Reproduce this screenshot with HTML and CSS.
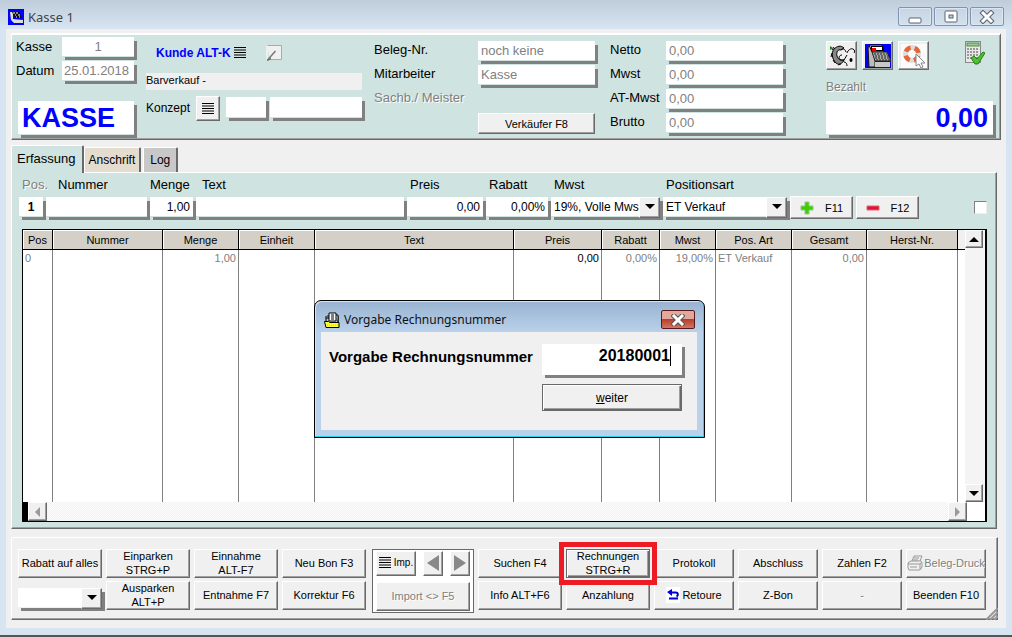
FILE: index.html
```html
<!DOCTYPE html>
<html lang="de">
<head>
<meta charset="utf-8">
<title>Kasse 1</title>
<link rel="stylesheet" href="styles.css">
</head>
<body>
<div class="window">
  <header class="titlebar">
    <svg class="app-icon" width="16" height="16" viewBox="0 0 16 16" aria-hidden="true"><rect width="16" height="16" fill="#00f"/><path d="M2 3h3v7l10 1v3H6L3 11z" fill="#ddd"/><path d="M4 3h7l3 6H7z" fill="#111"/><path d="M5 4h2M8 4h2M7 6h1M10 6h2M8 8h1M11 8h1" stroke="#fff"/></svg>
    <h1 class="title">Kasse 1</h1>
    <div class="win-buttons">
      <button class="win-btn" type="button" aria-label="Minimieren"><svg width="16" height="14" viewBox="0 0 16 14"><rect x="2" y="8" width="12" height="5" rx="1" fill="#fff" stroke="#5b6470"/></svg></button>
      <button class="win-btn" type="button" aria-label="Maximieren"><svg width="16" height="14" viewBox="0 0 16 14"><rect x="2" y="1" width="12" height="11" rx="1" fill="#fff" stroke="#5b6470"/><rect x="6" y="5" width="4" height="3" fill="#bccbda" stroke="#5b6470"/></svg></button>
      <button class="win-btn" type="button" aria-label="Schließen"><svg width="16" height="14" viewBox="0 0 16 14"><path d="M4 3l8 8M12 3l-8 8" stroke="#5b6470" stroke-width="5" stroke-linecap="square"/><path d="M4 3l8 8M12 3l-8 8" stroke="#fff" stroke-width="3" stroke-linecap="square"/></svg></button>
    </div>
  </header>

  <main class="client">
    <section class="panel head">
      <div class="head-kasse">
        <div class="pair"><label for="kasse">Kasse</label><input id="kasse" class="field muted center" value="1"></div>
        <div class="pair"><label for="datum">Datum</label><input id="datum" class="field muted" value="25.01.2018"></div>
        <output class="big">KASSE</output>
      </div>

      <div class="head-kunde">
        <div class="kunde-row">
          <a class="kunde" href="#kunde">Kunde ALT-K</a>
          <svg width="12" height="12" viewBox="0 0 12 12" aria-hidden="true"><path d="M0 .5h12M0 3h12M0 5.500h12M0 8h12M0 10.500h12" stroke="#000"/></svg>
          <button class="note" type="button" aria-label="Notiz"><svg width="16" height="16" viewBox="0 0 16 16"><path d="M1 .5h14.500v14H4" fill="#f0f0f0" stroke="#aaa"/><path d="M1 .5v15" stroke="#fff"/><path d="M1.500 15l8-9M1 15.500l4-2" stroke="#777" fill="none" stroke-width="1.500"/></svg></button>
        </div>
        <div class="bar">Barverkauf -</div>
        <div class="konzept-row">
          <label for="konzept">Konzept</label>
          <button class="btn konzept-btn" type="button" aria-label="Konzept wählen"><svg width="12" height="12" viewBox="0 0 12 12"><path d="M0 .5h12M0 3h12M0 5.500h12M0 8h12M0 10.500h12" stroke="#000"/></svg></button>
          <input id="konzept" class="field konzept-no">
          <input class="field konzept-text" aria-label="Konzepttext">
        </div>
      </div>

      <div class="head-rows head-beleg">
        <label for="beleg">Beleg-Nr.</label><input id="beleg" class="field muted" value="noch keine">
        <label for="mitarb">Mitarbeiter</label><input id="mitarb" class="field muted" value="Kasse">
        <span class="disabled">Sachb./ Meister</span><span></span>
        <span></span><button class="btn" type="button">Verkäufer F8</button>
      </div>

      <div class="head-rows head-summe">
        <label for="netto">Netto</label><input id="netto" class="field muted" value="0,00">
        <label for="mwst">Mwst</label><input id="mwst" class="field muted" value="0,00">
        <label for="atmwst">AT-Mwst</label><input id="atmwst" class="field muted" value="0,00">
        <label for="brutto">Brutto</label><input id="brutto" class="field muted" value="0,00">
      </div>

      <div class="head-bezahlt">
        <div class="tools">
          <button class="btn tool" type="button" aria-label="Räder"><svg width="26" height="24" viewBox="0 0 26 24"><path d="M15 4C12 1 8 2 5 5c-3 4-2 10 2 14 2 2 5 1 7-1l1-2c-4 1-6-1-7-4-1-4 1-7 4-6z" fill="#888" stroke="#000"/><path d="M5 3l-2 3M3 9L2 13M4 16l2 3M9 21l3-1" stroke="#000"/><path d="M12 6c2-2 4-1 5 2M13 11c-3 0-4 3-1 5h3l3-5M18 9c1-3 4-5 6-4s2 3 1 4M15 18c2 0 3 2 3 4" fill="none" stroke="#000"/><ellipse cx="22" cy="16" rx="1.500" ry="2"/><path d="M1 2l3 2-3 2z" fill="#080"/></svg></button>
          <button class="btn tool" type="button" aria-label="Kassenlade"><svg width="26" height="24" viewBox="0 0 26 24"><rect width="26" height="24" fill="#00f"/><path d="M3 3l3-1 4 13v8H4z" fill="#bbb" stroke="#111"/><path d="M4 1h13l2 7H7z" fill="#c8c8c8" stroke="#000"/><rect x="6.500" y="2.500" width="11" height="4" fill="#fff" stroke="#000"/><rect x="7" y="4" width="4" height="3" fill="#e00"/><path d="M7 8h15l4 9H10z" fill="#aaa" stroke="#222"/><path d="M9 10h13M10 12h14M10 14h14M11 16h14" stroke="#222" stroke-dasharray="2 1"/><rect x="10" y="18" width="15" height="5" fill="#c8c8c8"/></svg></button>
          <button class="btn tool" type="button" aria-label="Hilfe"><svg width="26" height="24" viewBox="0 0 26 24"><rect width="26" height="24" fill="#fbfbfb"/><circle cx="11" cy="10" r="6.500" fill="none" stroke="#ddd" stroke-width="5"/><circle cx="11" cy="10" r="6.500" fill="none" stroke="#e4673c" stroke-width="4.500" stroke-dasharray="6 4.210" stroke-dashoffset="-2"/><path d="M15 10v12l3-2 2 4 2-1-2-4h4z" fill="#fff" stroke="#888"/></svg></button>
          <svg class="calc" width="20" height="24" viewBox="0 0 20 24" aria-hidden="true"><rect x=".5" y=".5" width="15" height="21" fill="#e8e8e8" stroke="#888"/><rect x="2" y="2" width="12" height="3" fill="#9c8" stroke="#585"/><path d="M2 8h12M2 11h12M2 14h12M2 17h12" stroke="#999" stroke-width="2" stroke-dasharray="2 1"/><path d="M6 17l3-2 3 3 6-7 2 1-7 11h-3z" fill="#4cc22e" stroke="#287b1a"/></svg>
        </div>
        <span class="disabled bezahlt-label">Bezahlt</span>
        <output class="big right">0,00</output>
      </div>
    </section>

    <nav class="tabs" aria-label="Register">
      <button class="tab active" type="button">Erfassung</button>
      <button class="tab sand" type="button">Anschrift</button>
      <button class="tab grey" type="button">Log</button>
    </nav>

    <section class="panel sheet">
      <div class="entry">
        <div class="cell"><label class="disabled" for="e-pos">Pos.</label><input id="e-pos" class="field bold center" value="1"></div>
        <div class="cell"><label class="indent" for="e-nr">Nummer</label><input id="e-nr" class="field"></div>
        <div class="cell"><label class="flush" for="e-menge">Menge</label><input id="e-menge" class="field right" value="1,00"></div>
        <div class="cell"><label class="wide" for="e-text">Text</label><input id="e-text" class="field"></div>
        <div class="cell"><label for="e-preis">Preis</label><input id="e-preis" class="field right" value="0,00"></div>
        <div class="cell"><label for="e-rabatt">Rabatt</label><input id="e-rabatt" class="field right" value="0,00%"></div>
        <div class="cell"><label for="e-mwst">Mwst</label><div class="combo"><select id="e-mwst"><option>19%, Volle Mws</option></select></div></div>
        <div class="cell"><label for="e-art">Positionsart</label><div class="combo"><select id="e-art"><option>ET Verkauf</option></select></div></div>
        <button class="btn key" type="button"><svg width="14" height="14" viewBox="0 0 14 14" aria-hidden="true"><path d="M5 1h4v4h4v4H9v4H5V9H1V5h4z" fill="#4c0" stroke="#8c8"/></svg>F11</button>
        <button class="btn key" type="button"><svg width="14" height="14" viewBox="0 0 14 14" aria-hidden="true"><path d="M1 5h12v4H1z" fill="#e01040" stroke="#d66"/></svg>F12</button>
        <input class="tick" type="checkbox" aria-label="Auswahl">
      </div>

      <div class="grid">
        <div class="grid-main">
          <table>
            <colgroup><col class="c-pos"><col class="c-nr"><col class="c-mid"><col class="c-mid"><col><col class="c-preis"><col class="c-rabatt"><col class="c-mwst"><col class="c-mid"><col class="c-gesamt"><col class="c-herst"></colgroup>
            <thead><tr><th>Pos</th><th>Nummer</th><th>Menge</th><th>Einheit</th><th>Text</th><th>Preis</th><th>Rabatt</th><th>Mwst</th><th>Pos. Art</th><th>Gesamt</th><th>Herst-Nr.</th></tr></thead>
            <tbody>
              <tr><td>0</td><td></td><td class="right">1,00</td><td></td><td></td><td class="right strong">0,00</td><td class="right">0,00%</td><td class="right">19,00%</td><td>ET Verkauf</td><td class="right">0,00</td><td></td></tr>
              <tr class="rest"><td></td><td></td><td></td><td></td><td></td><td></td><td></td><td></td><td></td><td></td><td></td></tr>
            </tbody>
          </table>
        </div>
        <div class="vscroll">
          <button class="btn" type="button" aria-label="Nach oben"><svg width="10" height="5" viewBox="0 0 10 5"><path d="M0 5l5-5 5 5z"/></svg></button>
          <button class="btn" type="button" aria-label="Nach unten"><svg width="10" height="5" viewBox="0 0 10 5"><path d="M0 0h10l-5 5z"/></svg></button>
        </div>
        <div class="hscroll">
          <button class="btn" type="button" aria-label="Nach links"><svg width="5" height="10" viewBox="0 0 5 10"><path d="M5 0v10L0 5z" fill="#999"/></svg></button>
          <button class="btn" type="button" aria-label="Nach rechts"><svg width="5" height="10" viewBox="0 0 5 10"><path d="M0 0v10l5-5z" fill="#999"/></svg></button>
        </div>
      </div>
    </section>

    <section class="actions">
      <button class="btn" type="button">Rabatt auf alles</button>
      <button class="btn" type="button">Einparken<br>STRG+P</button>
      <button class="btn" type="button">Einnahme<br>ALT-F7</button>
      <button class="btn" type="button">Neu Bon F3</button>
      <div class="import">
        <button class="btn imp" type="button"><svg width="12" height="12" viewBox="0 0 12 12" aria-hidden="true"><path d="M0 .5h12M0 3h12M0 5.500h12M0 8h12M0 10.500h12" stroke="#000"/></svg>Imp.</button>
        <button class="btn" type="button" aria-label="Zurück"><svg width="12" height="16" viewBox="0 0 12 16"><path d="M12 0v16L0 8z" fill="#888"/></svg></button>
        <button class="btn" type="button" aria-label="Weiter"><svg width="12" height="16" viewBox="0 0 12 16"><path d="M0 0v16l12-8z" fill="#888"/></svg></button>
        <button class="btn off import-go" type="button">Import &lt;&gt; F5</button>
      </div>
      <button class="btn" type="button">Suchen F4</button>
      <button class="btn default marked" type="button">Rechnungen<br>STRG+R</button>
      <button class="btn" type="button">Protokoll</button>
      <button class="btn" type="button">Abschluss</button>
      <button class="btn" type="button">Zahlen F2</button>
      <button class="btn off print" type="button"><svg width="16" height="16" viewBox="0 0 16 16" aria-hidden="true"><path d="M5 6l2-5h8l-2 5M1 8l3-2h10l1 2v4l-2 3H2l-1-2zM1 9h12l2-2M13 9v5M7 3h5M6 5h5M3 12h7" fill="none" stroke="#999"/></svg>Beleg-Druck</button>
      <div class="combo actions-combo"><select aria-label="Rabatt"><option></option></select></div>
      <button class="btn" type="button">Ausparken<br>ALT+P</button>
      <button class="btn" type="button">Entnahme F7</button>
      <button class="btn" type="button">Korrektur F6</button>
      <button class="btn" type="button">Info ALT+F6</button>
      <button class="btn" type="button">Anzahlung</button>
      <button class="btn retoure" type="button"><svg width="14" height="16" viewBox="0 0 14 16" aria-hidden="true"><rect width="14" height="16" fill="#fff"/><path d="M6 2v7L1 5z" fill="#0000d8"/><path d="M5 5.500h4.500c3 0 3 3 1 4M3 11.500h9" fill="none" stroke="#0000d8" stroke-width="2"/></svg>Retoure</button>
      <button class="btn" type="button">Z-Bon</button>
      <button class="btn off" type="button">-</button>
      <button class="btn" type="button">Beenden F10</button>
      <svg class="grip" width="12" height="12" viewBox="0 0 12 12" aria-hidden="true"><path d="M0 12L12 0M4 12l8-8M8 12l4-4" stroke="#999" stroke-width="2"/></svg>
    </section>
  </main>

  <section class="dialog" role="dialog" aria-labelledby="dlg-title">
    <header class="dialog-bar">
      <svg width="16" height="16" viewBox="0 0 16 16" aria-hidden="true"><path d="M2 6h3M2 4v6M14 4v8" stroke="#000"/><path d="M5 1h7v8H5zM3 4h2M12 3h2v7" fill="#fff" stroke="#000"/><path d="M7 3h3M7 5h3M7 7h3" stroke="#000"/><path d="M.5 9.500h4l1 1h9.500v5H2z" fill="#ff3" stroke="#000"/><path d="M3 13h11" stroke="#cc0" stroke-dasharray="1 1"/></svg>
      <h2 class="title" id="dlg-title">Vorgabe Rechnungsnummer</h2>
      <button class="dialog-close" type="button" aria-label="Schließen"><svg width="14" height="12" viewBox="0 0 14 12"><path d="M3 2l8 8M11 2l-8 8" stroke="#555" stroke-width="5" stroke-linecap="square"/><path d="M3 2l8 8M11 2l-8 8" stroke="#fff" stroke-width="3" stroke-linecap="square"/></svg></button>
    </header>
    <form class="dialog-body">
      <label for="rnr">Vorgabe Rechnungsnummer</label>
      <div class="rnr"><input id="rnr" value="20180001"><span class="caret"></span></div>
      <button class="btn default weiter" type="button"><span><u>w</u>eiter</span></button>
    </form>
  </section>
</div>
</body>
</html>
```
FILE: styles.css
```css
* { box-sizing: border-box; }

body {
  margin: 0;
  font-family: "Liberation Sans", Arial, sans-serif;
  font-size: 13px;
  line-height: 16px;
  color: #000;
}

button, input, select { font: inherit; color: inherit; margin: 0; border-radius: 0; }
svg { flex: none; display: block; }

.window {
  position: relative;
  min-height: 100vh;
  display: flex;
  flex-direction: column;
  padding: 0 6px 7px;
  background: linear-gradient(#bfcddb, #d7e4f2 29px);
  border-bottom: 2px solid #555;
}

/* Title bar */
.titlebar { display: flex; align-items: center; height: 29px; padding: 4px 2px 0; }
.title { margin: 0; font: 400 13px/18px "Noto Sans", "Open Sans", sans-serif; color: #444; }
.app-icon { margin-right: 4px; }
.win-buttons { display: flex; gap: 2px; margin-left: auto; }
.win-btn {
  display: grid; place-items: center;
  width: 34px; height: 19px; padding: 0;
  border: 1px solid #8093b0; border-radius: 2px;
  background: linear-gradient(#c7d4e3, #d3e0ee);
  box-shadow: inset 0 0 0 1px #dbe6f2;
}

.client {
  flex: 1;
  display: flex;
  flex-direction: column;
  padding: 4px 5px 8px;
  background: #f0f0f0;
}

.panel {
  background: #cfe3e0;
  border: 1px solid;
  border-color: #fff #696969 #696969 #fff;
  box-shadow: inset -1px -1px #a0a0a0;
}

/* Shared controls */
.field {
  width: 100%; min-width: 0; height: 19px;
  padding: 0 3px;
  border: 0;
  background: #fff;
  box-shadow: 0 1px #cfe3e0, 3px 4px #808080;
}
.muted { color: #808080; }
.center { text-align: center; }
.right { text-align: right; }
.bold { font-weight: 700; }
.disabled { color: #808080; text-shadow: 1px 1px #fff; }

.btn {
  display: flex; align-items: center; justify-content: center;
  min-width: 0; padding: 0;
  border: 1px solid;
  border-color: #fff #696969 #696969 #fff;
  background: #f0f0f0;
  box-shadow: inset -1px -1px #a0a0a0;
  font-size: 11px; line-height: 14px;
  white-space: nowrap; overflow: hidden;
}
.off { color: #808080; text-shadow: 1px 1px #fff; }
.default {
  border: 1px solid #696969;
  box-shadow: inset 1px 1px #fff, inset -1px -1px #696969, inset -2px -2px #a0a0a0;
}

.combo { position: relative; height: 19px; box-shadow: 0 1px #cfe3e0, 3px 4px #808080; }
.combo select {
  appearance: none; display: block;
  width: 100%; height: 19px; padding: 0 19px 0 3px;
  border: 0; background: #fff; font-size: 12px;
}
.combo::before {
  content: ""; position: absolute; right: 0; top: 0;
  width: 19px; height: 19px;
  border: 1px solid; border-color: #fff #696969 #696969 #fff;
  background: #f0f0f0; box-shadow: inset -1px -1px #a0a0a0;
  pointer-events: none;
}
.combo::after {
  content: ""; position: absolute; right: 5px; top: 7px;
  border: 5px solid transparent; border-top-color: #000; border-bottom: 0;
  pointer-events: none;
}

/* Head panel */
.head {
  display: grid;
  grid-template-columns: 130px 228px 236px 216px 1fr;
  padding: 2px 7px 2px 4px;
  border-top-width: 2px;
}
.head-kasse { display: flex; flex-direction: column; gap: 5px; padding-right: 12px; }
.pair { display: grid; grid-template-columns: 46px 1fr; height: 19px; line-height: 19px; }
.pair .field { padding: 0 2px; }
.big {
  height: 33px; padding: 0 5px 0 4px;
  background: #fff; color: #00f;
  box-shadow: 0 1px #cfe3e0, 3px 4px #808080;
  font-size: 27px; line-height: 35px; font-weight: 700;
}
.head-kasse .big { margin: 16px 0 0 2px; }

.head-kunde { padding-top: 6px; }
.kunde-row { display: flex; align-items: center; height: 20px; padding-left: 10px; }
.kunde { margin-right: 3px; font-size: 12px; font-weight: 700; color: #00f; text-decoration: none; }
.note { margin-left: 20px; padding: 0; border: 0; background: none; }
.bar { height: 17px; margin: 10px 12px 0 0; background: #f0f0f0; font-size: 11px; line-height: 15px; }
.konzept-row { display: flex; margin-top: 6px; padding-right: 12px; font-size: 12px; }
.konzept-row label { flex: none; width: 50px; line-height: 25px; }
.konzept-btn { flex: none; width: 24px; height: 25px; margin-right: 6px; }
.konzept-row .field { height: 20px; margin-top: 1px; }
.konzept-row .konzept-no { flex: none; width: 40px; margin-right: 4px; }

.head-rows { display: grid; grid-auto-rows: 24px; padding-top: 4px; line-height: 17px; }
.head-beleg { grid-template-columns: 104px 1fr; padding-right: 15px; }
.head-beleg .btn { height: 21px; }
.head-summe { grid-template-columns: 56px 1fr; padding-right: 43px; }

.head-bezahlt { display: flex; flex-direction: column; padding-top: 4px; }
.tools { display: flex; gap: 5px; }
.tool { width: 31px; height: 29px; }
.calc { margin: 0 8px 0 auto; }
.bezahlt-label { margin: 9px 0 6px; font-size: 12px; }

/* Tabs */
.tabs { display: flex; align-items: flex-end; height: 32px; }
.tab {
  height: 25px; padding: 0 4px;
  border: 1px solid; border-width: 1px 2px 0 1px;
  border-color: #fff #696969 #fff #fff;
  border-radius: 2px 2px 0 0;
  font-size: 12px;
}
.tab.active { height: 28px; padding: 0 6px 2px 5px; background: #cfe3e0; font-size: 13px; margin-bottom: -1px; position: relative; }
.tab.sand { background: #e3dccf; margin-right: 2px; }
.tab.grey { background: #c8c8c8; padding: 0 6px; }

/* Line entry */
.sheet { flex: 1; display: flex; flex-direction: column; margin-right: 4px; padding: 4px 9px 6px 7px; }
.entry {
  display: grid;
  grid-template-columns: 27px 104px 46px 1fr 79px 65px 112px 127px 66px 63px 68px;
  align-items: end;
}
.cell { display: flex; flex-direction: column; gap: 4px; padding: 0 3px 3px 0; font-size: 12px; }
.cell label { padding-left: 3px; font-size: 13px; }
.cell .indent { padding-left: 12px; }
.cell .flush { padding-left: 0; }
.cell .wide { padding-left: 6px; }
.key { height: 23px; gap: 11px; }
.key:nth-of-type(1) { margin-right: 3px; }
.tick {
  appearance: none; justify-self: end;
  width: 13px; height: 13px; margin-bottom: 5px;
  background: #fff; border: 1px solid; border-color: #808080 #eee #eee #808080;
}

/* Item grid */
.grid {
  flex: 1;
  display: grid;
  grid-template: minmax(230px, 1fr) 19px / 1fr 20px;
  margin: 10px 0 0 3px;
  border: 1px solid #000;
  border-right-width: 2px;
  background: #fff;
}
.grid-main { display: grid; padding-right: 7px; background: linear-gradient(#f0f0f0 19px, #000 19px, #000 20px, #fff 20px); }
table { width: 100%; height: 100%; table-layout: fixed; border-collapse: separate; border-spacing: 0; background: #fff; font-size: 11px; line-height: 14px; }
.c-pos { width: 30px; }
.c-nr { width: 110px; }
.c-mid { width: 76px; }
.c-preis { width: 88px; }
.c-rabatt { width: 58px; }
.c-mwst { width: 56px; }
.c-gesamt { width: 75px; }
.c-herst { width: 91px; }
th {
  height: 20px; padding: 0;
  border-right: 1px solid #000; border-bottom: 1px solid #000;
  background: #d4d0c8; box-shadow: inset 1px 1px #fff;
  font-weight: 400;
}
td { height: 18px; padding: 1px 2px; border-right: 1px solid #808080; color: #808080; vertical-align: top; white-space: nowrap; }
.strong { color: #000; }
.rest td { height: auto; }
.vscroll { display: flex; flex-direction: column; justify-content: space-between; padding-right: 2px; background: #f4f4f4; }
.vscroll .btn { height: 18px; }
.hscroll {
  grid-column: 1 / 3;
  display: flex; justify-content: space-between;
  margin-right: 18px; border-left: 5px solid #000;
  background: repeating-conic-gradient(#f0f0f0 0 25%, #fff 0 50%) 0 0 / 2px 2px;
}
.hscroll .btn { width: 19px; }

/* Action bar */
.actions {
  position: relative;
  display: grid;
  grid-template: 29px 29px / repeat(4, 84fr) 104px repeat(2, 84fr) repeat(4, 80fr);
  gap: 3px 4px;
  margin: 8px 3px 0 0;
  padding: 11px 11px 9px 6px;
  border: 1px solid;
  border-color: #fff #696969 #696969 #fff;
  box-shadow: inset -1px -1px #a0a0a0;
}
.actions .btn { padding-bottom: 1px; }
.import {
  grid-row: span 2;
  display: grid;
  grid-template: 25px 29px / 40px 20px 20px;
  gap: 6px;
  margin: 0 0 -3px 2px;
  padding: 1px 3px;
  justify-content: space-between;
  border: 1px solid #696969;
  background: #fff;
}
.imp { gap: 3px; font-size: 10px; }
.import-go { grid-column: 1 / 4; }
.marked { outline: 5px solid #ed1c24; outline-offset: 2px; z-index: 1; }
.print { gap: 1px; }
.retoure { gap: 2px; }
.actions-combo { align-self: end; margin-bottom: 3px; box-shadow: 0 1px #f0f0f0, 3px 4px #808080; }
.grip { position: absolute; right: -1px; bottom: -1px; }

/* Dialog window */
.dialog {
  position: absolute; left: 314px; top: 300px; width: 391px;
  padding: 0 7px 7px 6px;
  border: 1px solid #000;
  border-radius: 7px 7px 0 0;
  background: linear-gradient(#98b3d1, #b9d1ea 31px);
  box-shadow: inset -1px -1px #29d3f0, inset 1px 1px #d5e4f4;
}
.dialog-bar { display: flex; align-items: center; gap: 4px; height: 31px; padding: 6px 2px 0 3px; }
.dialog-bar .title { color: #111; font-size: 12px; }
.dialog-close {
  display: grid; place-items: center;
  width: 34px; height: 19px; margin-left: auto; padding: 0;
  border: 1px solid #5b1a1a; border-radius: 2px;
  background: linear-gradient(#e3a79b 45%, #b8402a 50%, #cf7766);
}
.dialog-body {
  display: grid;
  grid-template-columns: 1fr 140px;
  gap: 9px 4px;
  padding: 12px 15px 19px 8px;
  background: #f0f0f0;
}
.dialog-body label { font-size: 15px; font-weight: 700; line-height: 26px; white-space: nowrap; }
.rnr { display: flex; height: 31px; background: #fff; box-shadow: 3px 3px #808080; }
.rnr input { width: 128px; height: 24px; padding: 0; border: 0; background: none; outline: 0; font-size: 16px; font-weight: 700; text-align: right; }
.caret { width: 1px; height: 20px; margin-top: 2px; background: #000; }
.weiter { grid-column: 2; height: 27px; font-size: 12px; }
```
